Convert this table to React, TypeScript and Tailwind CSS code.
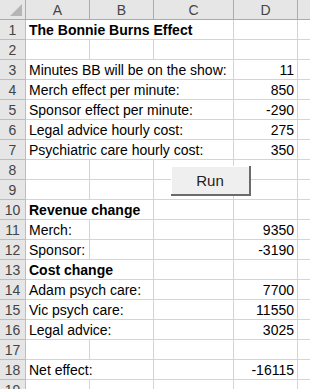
import React from "react";

type Row = {
  n: number;
  label?: string;
  span?: number; // how many of A..C the label spills over
  bold?: boolean;
  value?: string;
};

const rows: Row[] = [
  { n: 1, label: "The Bonnie Burns Effect", span: 3, bold: true },
  { n: 2 },
  { n: 3, label: "Minutes BB will be on the show:", span: 3, value: "11" },
  { n: 4, label: "Merch effect per minute:", span: 3, value: "850" },
  { n: 5, label: "Sponsor effect per minute:", span: 3, value: "-290" },
  { n: 6, label: "Legal advice hourly cost:", span: 3, value: "275" },
  { n: 7, label: "Psychiatric care hourly cost:", span: 3, value: "350" },
  { n: 8 },
  { n: 9 },
  { n: 10, label: "Revenue change", span: 2, bold: true },
  { n: 11, label: "Merch:", span: 1, value: "9350" },
  { n: 12, label: "Sponsor:", span: 1, value: "-3190" },
  { n: 13, label: "Cost change", span: 2, bold: true },
  { n: 14, label: "Adam psych care:", span: 2, value: "7700" },
  { n: 15, label: "Vic psych care:", span: 2, value: "11550" },
  { n: 16, label: "Legal advice:", span: 2, value: "3025" },
  { n: 17 },
  { n: 18, label: "Net effect:", span: 2, value: "-16115" },
  { n: 19 },
];

const cols = "grid grid-cols-[26px_64px_64px_80px_64px_1fr]";
const cell = "h-5 border-r border-b border-[#d4d4d4] overflow-visible whitespace-nowrap";

const spanClass: Record<number, string> = {
  1: "col-span-1",
  2: "col-span-2",
  3: "col-span-3",
};

function SheetRow({ row }: { row: Row }) {
  const span = row.label ? row.span ?? 1 : 0;
  const fillers = 3 - span;
  return (
    <div className={cols}>
      <div className="h-5 border-r border-b border-[#bdbdbd] bg-[#e6e6e6] text-[#444] flex items-center justify-center text-[14px] leading-none">
        {row.n}
      </div>
      {row.label && (
        <div
          className={`${cell} ${spanClass[span]} pl-[3px] pt-[1px] flex items-center ${
            row.bold ? "font-bold" : ""
          }`}
        >
          {row.label}
        </div>
      )}
      {Array.from({ length: fillers }).map((_, i) => (
        <div key={i} className={cell} />
      ))}
      <div className={`${cell} pr-[3px] pt-[1px] flex items-center justify-end`}>{row.value}</div>
      <div className="h-5 border-b border-[#d4d4d4]" />
    </div>
  );
}

export default function App() {
  return (
    <div
      className="relative w-[310px] h-[389px] overflow-hidden bg-white text-black text-[14px] leading-none"
      style={{ fontFamily: '"Liberation Sans", Arial, sans-serif' }}
    >
      {/* column headers */}
      <div className={`${cols} bg-[#e6e6e6] text-[#444]`}>
        <div className="relative h-5 border-r border-b border-[#ababab]">
          <div className="absolute right-[3px] bottom-[3px] w-0 h-0 border-l-[12px] border-l-transparent border-b-[12px] border-b-[#b5b5b5]" />
        </div>
        {["A", "B", "C", "D"].map((c) => (
          <div
            key={c}
            className="h-5 border-r border-b border-[#ababab] flex items-center justify-center"
          >
            {c}
          </div>
        ))}
        <div className="h-5 border-b border-[#ababab]" />
      </div>

      {rows.map((r) => (
        <SheetRow key={r.n} row={r} />
      ))}

      {/* macro button sitting over rows 8-9 */}
      <button className="absolute left-[171px] top-[166px] w-[80px] h-[30px] bg-[#efefef] border-r-2 border-b-2 border-[#6b6b6b] shadow-[inset_1px_1px_0_#ffffff] flex items-center justify-center text-[15px] text-[#222]">
        Run
      </button>
    </div>
  );
}
